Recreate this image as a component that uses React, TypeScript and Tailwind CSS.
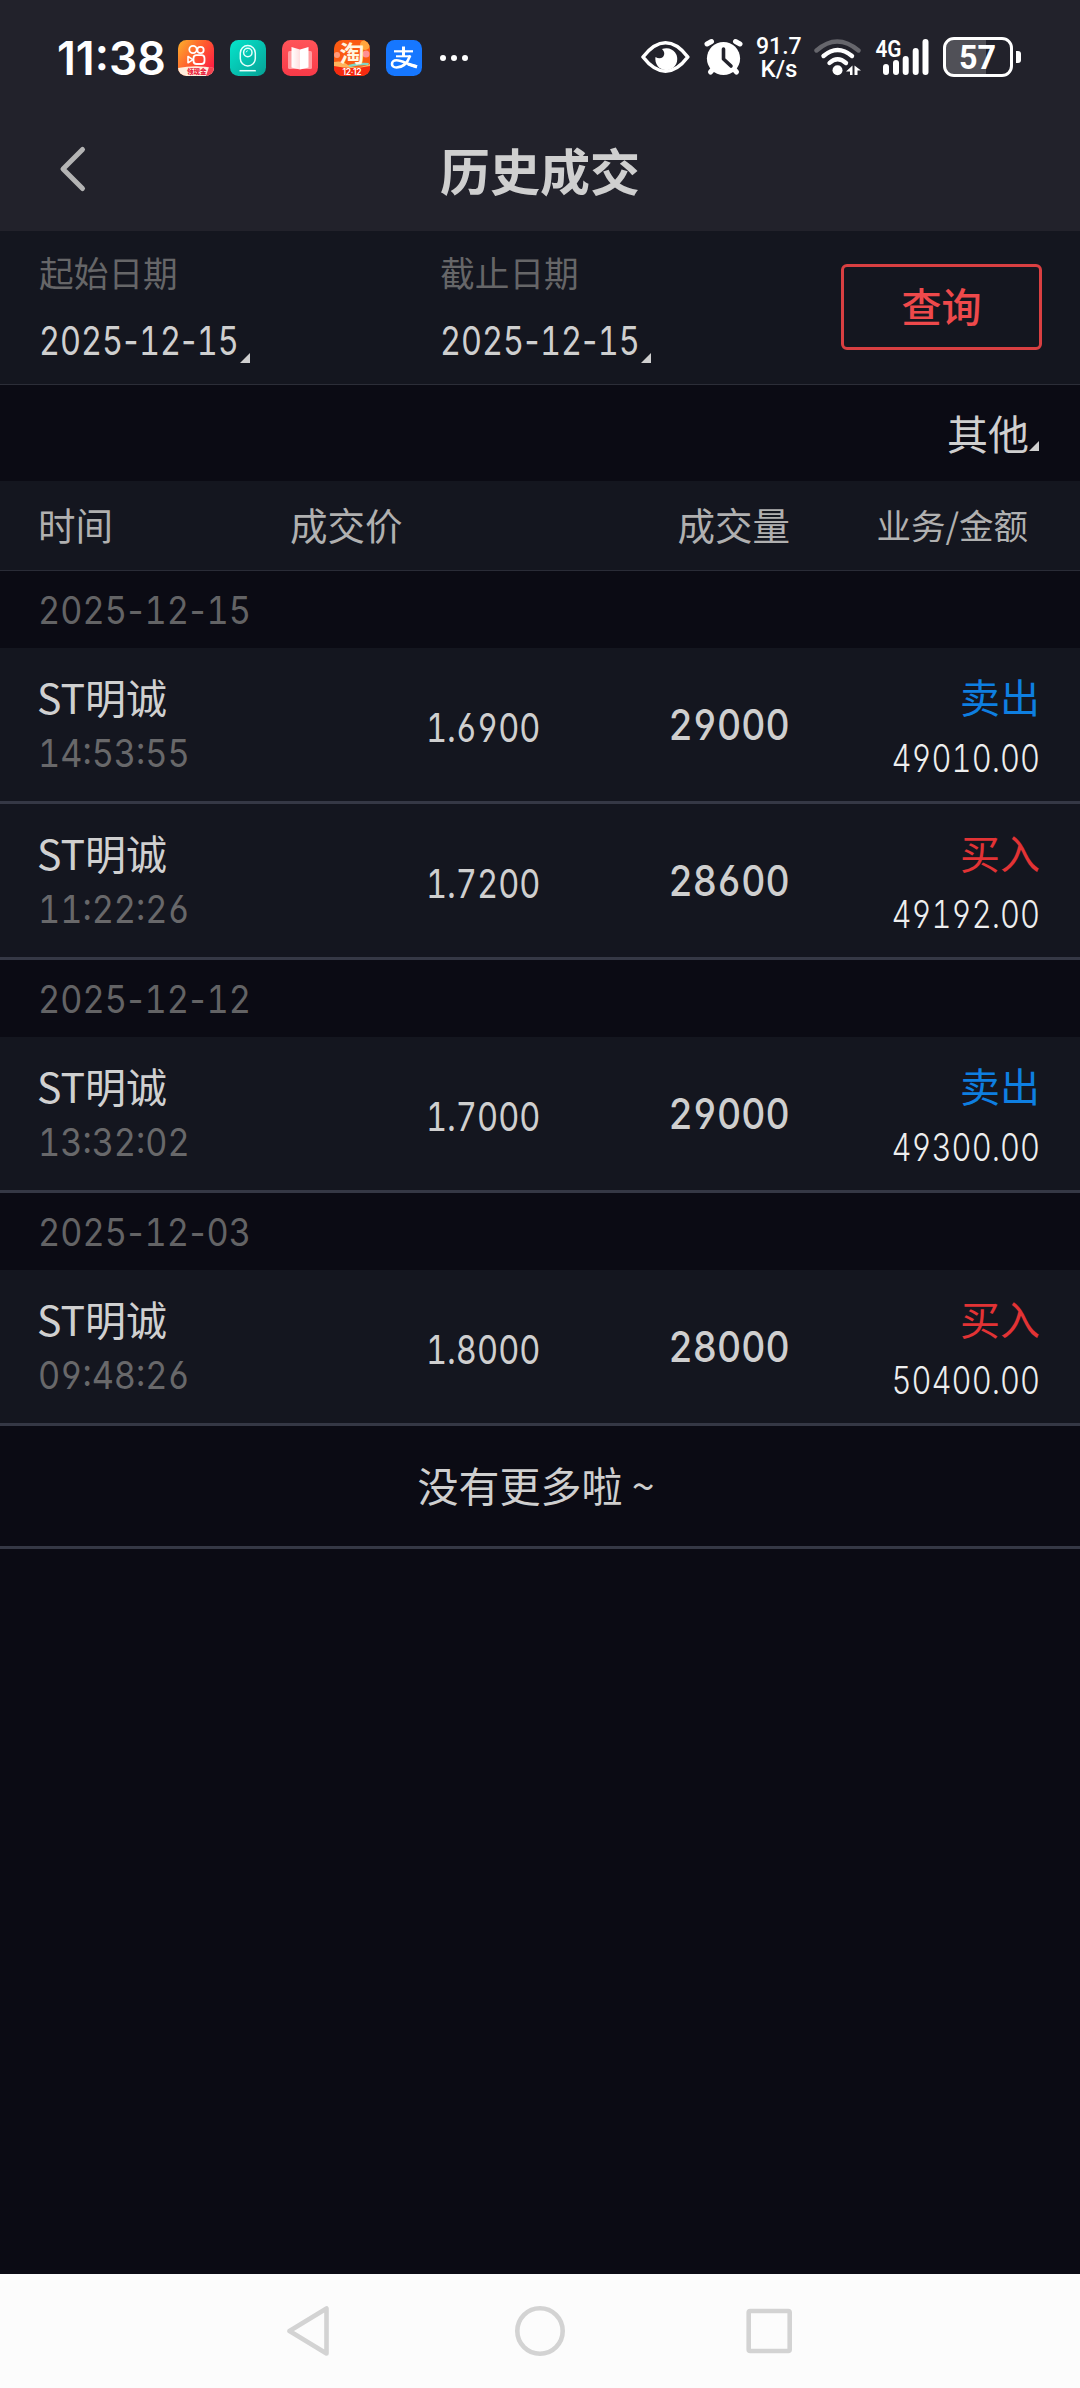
import React from "react";

type Trade = {
  name: string;
  time: string;
  price: string;
  volume: string;
  side: "卖出" | "买入";
  amount: string;
};

const groups: { date: string; trades: Trade[] }[] = [
  {
    date: "2025-12-15",
    trades: [
      { name: "ST明诚", time: "14:53:55", price: "1.6900", volume: "29000", side: "卖出", amount: "49010.00" },
      { name: "ST明诚", time: "11:22:26", price: "1.7200", volume: "28600", side: "买入", amount: "49192.00" },
    ],
  },
  {
    date: "2025-12-12",
    trades: [{ name: "ST明诚", time: "13:32:02", price: "1.7000", volume: "29000", side: "卖出", amount: "49300.00" }],
  },
  {
    date: "2025-12-03",
    trades: [{ name: "ST明诚", time: "09:48:26", price: "1.8000", volume: "28000", side: "买入", amount: "50400.00" }],
  },
];

const digits = "font-['Inter',sans-serif] tabular-nums [font-feature-settings:'tnum','cv03','cv04'] whitespace-nowrap";

function AppIcons() {
  return (
    <div className="ml-[13px] flex gap-4">
      <svg width="36" height="36" viewBox="0 0 36 36" fill="none">
        <defs>
          <linearGradient id="ks" x1="0" y1="0.1" x2="1" y2="0.8">
            <stop offset="0" stopColor="#fdaa2c" />
            <stop offset="0.5" stopColor="#ff5a2e" />
            <stop offset="1" stopColor="#fb1b45" />
          </linearGradient>
          <clipPath id="ksClip">
            <rect width="36" height="36" rx="8.5" />
          </clipPath>
        </defs>
        <g clipPath="url(#ksClip)">
          <rect width="36" height="36" fill="url(#ks)" />
          <path d="M0 28 Q18 24.500 36 28 V36 H0Z" fill="#ffeedd" />
          <path d="M28 36 L31 27 L36 28 V36Z" fill="#f5434f" />
        </g>
        <circle cx="15" cy="9.500" r="3.700" stroke="#fff" strokeWidth="1.800" />
        <circle cx="22.500" cy="10" r="3.200" stroke="#fff" strokeWidth="1.800" />
        <rect x="15.500" y="15.200" width="11" height="8.800" rx="3" stroke="#fff" strokeWidth="1.800" />
        <path d="M15 19.600 L10 16.500 V22.800 Z" stroke="#fff" strokeWidth="1.600" strokeLinejoin="round" />
        <text x="9" y="34" fontSize="6.500" fontWeight="900" fill="#e8203c" fontFamily="Noto Sans CJK SC, sans-serif">
          领现金
        </text>
      </svg>
      <svg width="36" height="36" viewBox="0 0 36 36" fill="none">
        <defs>
          <linearGradient id="teal" x1="0" y1="0" x2="1" y2="1">
            <stop offset="0" stopColor="#06e5cc" />
            <stop offset="1" stopColor="#06a195" />
          </linearGradient>
        </defs>
        <rect width="36" height="36" rx="8.500" fill="url(#teal)" />
        <rect x="10.300" y="5.500" width="15" height="20.500" rx="7.500" stroke="#e6fffb" strokeWidth="1.500" />
        <circle cx="17.800" cy="12.500" r="4.200" stroke="#e6fffb" strokeWidth="1.500" />
        <path d="M16.200 12.300 a1.800 1.800 0 0 1 1.600 -1.600" stroke="#e6fffb" strokeWidth="0.900" />
        <path d="M9.500 30.700 H25.800" stroke="#e6fffb" strokeWidth="1.500" />
      </svg>
      <svg width="36" height="36" viewBox="0 0 36 36">
        <defs>
          <linearGradient id="book" x1="0" y1="0" x2="0" y2="1">
            <stop offset="0" stopColor="#ff5459" />
            <stop offset="1" stopColor="#f83a48" />
          </linearGradient>
          <linearGradient id="page" x1="0" y1="0" x2="1" y2="0">
            <stop offset="0" stopColor="#fff" />
            <stop offset="1" stopColor="#ffdfe0" />
          </linearGradient>
        </defs>
        <rect width="36" height="36" rx="8.500" fill="url(#book)" />
        <rect x="6" y="11" width="24" height="18" rx="1.500" fill="#ff9da1" />
        <path d="M9.500 7 L18 9.500 V29.500 L9.500 27.500Z" fill="url(#page)" />
        <path d="M26.500 7 L18 9.500 V29.500 L26.500 27.500Z" fill="#fff" />
      </svg>
      <svg className="overflow-visible" width="36" height="36" viewBox="0 0 36 36">
        <defs>
          <clipPath id="tbClip">
            <rect width="36" height="36" rx="8.500" />
          </clipPath>
        </defs>
        <g clipPath="url(#tbClip)">
          <rect width="36" height="36" fill="#fb5a12" />
          <circle cx="31" cy="5" r="5" fill="#ffa53d" />
          <circle cx="32" cy="14" r="3.500" fill="#ff8f92" />
          <circle cx="3" cy="15" r="3" fill="#ff9a7a" />
          <path d="M0 22 Q8 20 14 25 T36 24 V28 Q20 30 0 27Z" fill="#ffb45c" />
          <path d="M14 25 Q24 22 35 23 L34 25 Q24 25 16 27Z" fill="#7fd6c3" />
          <path d="M0 26 Q18 30 36 26 V36 H0Z" fill="#f52a10" />
        </g>
        <text x="5.500" y="21.500" fontSize="23" fontWeight="700" fill="#fff5e0" fontFamily="Noto Sans CJK SC, sans-serif" textLength="25" lengthAdjust="spacingAndGlyphs">
          淘
        </text>
        <text x="8.500" y="34.500" fontSize="8.500" fontWeight="600" fill="#fff" fontFamily="Inter, sans-serif" textLength="19">
          12·12
        </text>
      </svg>
      <svg width="36" height="36" viewBox="0 0 36 36" fill="none">
        <rect width="36" height="36" rx="8.500" fill="#1677ff" />
        <g stroke="#fff" strokeLinecap="butt">
          <path d="M8 11.300 H27" strokeWidth="2.200" />
          <path d="M17.500 6.500 V16.500" strokeWidth="3" />
          <path d="M10 16.300 H24.500" strokeWidth="2" />
          <path d="M24.200 15.500 C22 21.500 17.500 27.500 10.500 27.500 C4.500 27.500 4.500 20.300 10.500 20.300 C17 20.300 22.500 25.500 31 26.500" strokeWidth="2.600" />
          <path d="M22 24 L31 26.800" strokeWidth="3.400" />
        </g>
      </svg>
    </div>
  );
}

function StatusBar() {
  return (
    <div className="flex h-[116px] pl-[57px]">
      <div className="flex h-full w-[543px] items-center">
        <span className="w-[108px] text-white">
          <span className="inline-block origin-left scale-x-[0.97] whitespace-nowrap font-['Inter',sans-serif] text-[46px] font-semibold leading-none">
            11:38
          </span>
        </span>
        <AppIcons />
        <div className="ml-[18px] flex gap-[5px]">
          <i className="size-[6px] rounded-full bg-white" />
          <i className="size-[6px] rounded-full bg-white" />
          <i className="size-[6px] rounded-full bg-white" />
        </div>
      </div>
      <svg className="ml-[41px] mt-9" width="102" height="44" viewBox="641 36 102 44" fill="none">
        <path d="M643 57 C650 48 657 42.800 665.500 42.800 C674 42.800 681 48 687.800 57 C681 66 674 71.200 665.500 71.200 C657 71.200 650 66 643 57Z" stroke="#fff" strokeWidth="3.600" strokeLinejoin="round" />
        <path d="M662 49 A11 11 0 1 1 655.500 57 Q659.500 59.500 663 57 Q666 53 662 49Z" fill="#fff" />
        <circle cx="723.500" cy="58.500" r="16.600" fill="#fff" />
        <g stroke="#fff" strokeWidth="5" strokeLinecap="round">
          <path d="M707 44 L711.500 41.500" />
          <path d="M740 44 L735.500 41.500" />
          <path d="M714 68 L710.500 72" />
          <path d="M733 68 L736.500 72" />
        </g>
        <path d="M723.500 49 V59 L731 66" stroke="#22222b" strokeWidth="3.600" strokeLinecap="round" strokeLinejoin="round" />
      </svg>
      <div className="ml-3 mt-[35px] flex w-[48px] flex-col items-center font-['Roboto',sans-serif] text-[24px] font-medium leading-[23px] text-white">
        <span className="scale-x-[0.96] whitespace-nowrap">91.7</span>
        <span className="whitespace-nowrap">K/s</span>
      </div>
      <svg className="ml-[9px] mt-9" width="120" height="44" viewBox="812 36 120 44" fill="none">
        <g strokeLinecap="round" strokeWidth="4.400" stroke="#fff">
          <path d="M816.500 50.500 Q837 32.500 858.500 50.500" stroke="#66666c" />
          <path d="M823.500 56 Q837.500 44 852 56" />
          <path d="M829.500 63 Q837.500 55.500 846 63" />
        </g>
        <circle cx="837.500" cy="70.300" r="5" fill="#fff" />
        <path d="M846 71.500 L852.500 65.500 V75 H850 V71.500Z M854.500 65.500 L861 70.500 H857.500 V75 H854.500Z" fill="#fff" />
        <text x="875.500" y="57" fontSize="24" fontWeight="600" fill="#fff" fontFamily="Roboto, sans-serif" textLength="26" lengthAdjust="spacingAndGlyphs">
          4G
        </text>
        <g stroke="#fff" strokeWidth="6" strokeLinecap="round">
          <path d="M886 67 V72" />
          <path d="M896 63 V72" />
          <path d="M905.700 59 V72" />
          <path d="M915.700 51 V72" />
          <path d="M925.500 42 V72" />
        </g>
      </svg>
      <div className="ml-[11px] mt-[37px] flex h-10 items-center">
        <div className="flex h-10 w-[70px] items-center justify-center rounded-[11px] border-[3px] border-white bg-[linear-gradient(90deg,#505057_62%,#22222b_62%)]">
          <span className="scale-x-[0.95] font-['Roboto',sans-serif] text-[34px] font-bold leading-none text-white">57</span>
        </div>
        <i className="ml-[3px] h-3 w-[5px] rounded-r-[3px] bg-white" />
      </div>
    </div>
  );
}

function Caret({ className }: { className: string }) {
  return (
    <svg className={className} width="10" height="10" viewBox="0 0 10 10">
      <path d="M10 0 V10 H0Z" fill="#cfcfcf" />
    </svg>
  );
}

function DateText({ value, dashClass }: { value: string; dashClass: string }) {
  const [year, month, day] = value.split("-");
  return (
    <>
      {year}
      <span className={dashClass}>-</span>
      {month}
      <span className={dashClass}>-</span>
      {day}
    </>
  );
}

function DateField({ label, value }: { label: string; value: string }) {
  return (
    <div className="w-[401px] pt-[23px]">
      <div className="text-[34.700px] leading-[36px] text-[#666668]">{label}</div>
      <div className="mt-[31px] flex h-10 items-center">
        <span className="w-[201px]">
          <span className={`${digits} inline-block origin-left scale-x-[0.81] text-[40px] leading-10 text-[#cfcfcf]`}>
            <DateText value={value} dashClass="-mx-[3.200px]" />
          </span>
        </span>
        <Caret className="mt-[33px]" />
      </div>
    </div>
  );
}

function TradeRow({ trade }: { trade: Trade }) {
  const sideColor = trade.side === "卖出" ? "text-[#0e7fe1]" : "text-[#e23335]";
  return (
    <div className="grid h-[156px] grid-cols-[252px_250px_250px_250px] border-b-[3px] border-[#353845] bg-[#14161f] px-[38px]">
      <div className="pt-7">
        <div className="-ml-px whitespace-nowrap text-[41px] leading-10 text-[#d0d0d0]">{trade.name}</div>
        <div className={`${digits} mt-[17px] origin-left scale-x-[0.89] text-[38.500px] leading-10 text-[#68686a]`}>{trade.time}</div>
      </div>
      <div className="pt-[60px] text-right">
        <span className={`${digits} inline-block origin-right scale-x-[0.815] text-[40px] leading-10 text-[#cfcfcf]`}>{trade.price}</span>
      </div>
      <div className="pt-[57px] text-right">
        <span className={`${digits} inline-block origin-right scale-x-[0.88] text-[42.500px] font-[450] leading-10 text-[#cfcfcf]`}>{trade.volume}</span>
      </div>
      <div className="pt-7 text-right">
        <div className={`text-[40px] leading-10 ${sideColor}`}>{trade.side}</div>
        <div className={`${digits} mt-[23px] origin-right scale-x-[0.825] text-[37.500px] font-[350] leading-10 text-[#eeeeee]`}>{trade.amount}</div>
      </div>
    </div>
  );
}

export default function App() {
  return (
    <div className="flex h-[2388px] w-[1080px] flex-col overflow-hidden bg-[#0b0b14] font-['Noto_Sans_CJK_SC',sans-serif]">
      <header className="h-[231px] bg-[#22222b]">
        <StatusBar />
        <div className="grid h-[106px] grid-cols-[1fr_auto_1fr] items-center">
          <svg className="ml-[59px]" width="28" height="48" viewBox="0 0 28 48" fill="none">
            <path d="M23.500 4.500 L4 24 L23.500 43.500" stroke="#b4b4b4" strokeWidth="5" strokeLinecap="round" strokeLinejoin="round" />
          </svg>
          <h1 className="text-[50px] font-bold leading-none text-[#cfcfcf]">历史成交</h1>
          <span />
        </div>
      </header>

      <section className="flex h-[154px] border-b border-[#2c2e38] bg-[#14161f] pl-[39px]">
        <DateField label="起始日期" value="2025-12-15" />
        <DateField label="截止日期" value="2025-12-15" />
        <button className="mt-[33px] flex h-[86px] w-[201px] items-center justify-center rounded-[6px] border-[3px] border-[#d93f41] pb-1 text-[40px] font-medium leading-none text-[#ee494b]">
          查询
        </button>
      </section>

      <div className="flex h-24 items-center justify-end pr-[41px]">
        <span className="pb-[2px] text-[41px] leading-none text-[#cfcfcf]">其他</span>
        <Caret className="mt-[26px]" />
      </div>

      <div className="grid h-[90px] grid-cols-[252px_250px_250px_250px] items-center border-b border-[#2a2c37] bg-[#14161f] px-[38px] pb-[3px] text-[37.500px] leading-none text-[#b0b0b0]">
        <span>时间</span>
        <span>成交价</span>
        <span className="text-right">成交量</span>
        <span className="pr-3 text-right text-[34.500px]">业务/金额</span>
      </div>

      {groups.map((group) => (
        <section key={group.date}>
          <div className="flex h-[77px] items-center pl-[38px]">
            <span className={`${digits} origin-left scale-x-[0.89] text-[38.500px] leading-10 text-[#636365]`}>
              <DateText value={group.date} dashClass="-mx-[2.600px]" />
            </span>
          </div>
          {group.trades.map((trade) => (
            <TradeRow key={trade.time} trade={trade} />
          ))}
        </section>
      ))}

      <div className="flex h-[123px] items-center justify-center border-b-[3px] border-[#353845] pb-1 pr-2 text-[41px] leading-none text-[#cfcfcf]">
        没有更多啦 ~
      </div>

      <nav className="mt-auto flex h-[114px] items-center justify-center bg-[#fcfcfc]">
        <svg width="506" height="52" viewBox="287 2305 506 52" fill="none" stroke="#d3d3d3" strokeWidth="4.600" strokeLinejoin="round">
          <path d="M289.500 2331 L326.500 2308.500 V2353.500 Z" />
          <circle cx="540" cy="2331" r="22.700" />
          <rect x="748.700" y="2311" width="41" height="40" rx="1.500" />
        </svg>
      </nav>
    </div>
  );
}
